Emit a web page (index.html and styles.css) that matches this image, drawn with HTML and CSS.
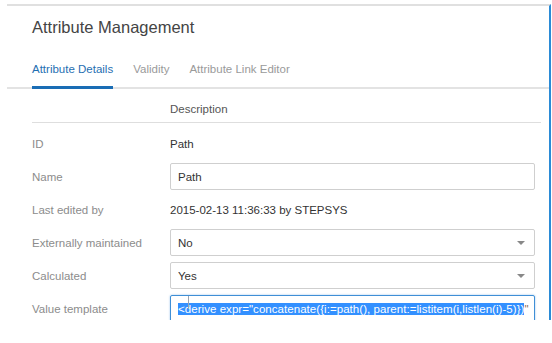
FILE: index.html
```html
<!DOCTYPE html>
<html>
<head>
<meta charset="utf-8">
<link rel="stylesheet" href="styles.css">
</head>
<body>
<div class="panel">
  <h1 class="title">Attribute Management</h1>
  <div class="tabs">
    <div class="tab active">Attribute Details</div>
    <div class="tab">Validity</div>
    <div class="tab">Attribute Link Editor</div>
  </div>
  <div class="content">
    <div class="head"><span>Description</span></div>
    <div class="form">
      <div class="label">ID</div>
      <div class="value">Path</div>

      <div class="label">Name</div>
      <div class="field"><div class="box"><span class="clip">Path</span></div></div>

      <div class="label">Last edited by</div>
      <div class="value">2015-02-13 11:36:33 by STEPSYS</div>

      <div class="label">Externally maintained</div>
      <div class="field"><div class="box select"><span class="clip">No</span><span class="caret"></span></div></div>

      <div class="label">Calculated</div>
      <div class="field"><div class="box select"><span class="clip">Yes</span><span class="caret"></span></div></div>

      <div class="label">Value template</div>
      <div class="field"><div class="box focus"><span class="clip"><span class="sel">&lt;derive expr="concatenate({i:=path(), parent:=listitem(i,listlen(i)-5)})</span><span class="rest">"</span></span><span class="ibeam"></span></div></div>
    </div>
  </div>
</div>
</body>
</html>
```

FILE: styles.css
```css
html, body {
  margin: 0;
  padding: 0;
  background: #ffffff;
}
body {
  font-family: "Liberation Sans", Arial, sans-serif;
  font-size: 11.5px;
  color: #333;
}
.panel {
  margin: 4px 0 0 7px;
  width: 542px;
  height: 314px;
  border-top: 2px solid #e0e0e0;
  border-right: 2px solid #2b8bd6;
}
.title {
  margin: 0;
  padding: 11px 0 0 25px;
  font-size: 16.5px;
  line-height: 20px;
  font-weight: normal;
  color: #444;
}
.tabs {
  display: flex;
  gap: 20px;
  margin-top: 25px;
  padding-left: 25px;
  border-bottom: 2px solid #e3e3e3;
}
.tab {
  line-height: 14px;
  padding-bottom: 11px;
  color: #9a9a9a;
}
.tab.active {
  color: #1f6fb2;
  border-bottom: 3px solid #1a6db5;
  padding-bottom: 8px;
  margin-bottom: -2px;
}
.content {
  margin-left: 25px;
  width: 509px;
}
.head {
  padding: 13px 0 6px 138px;
  line-height: 14px;
  color: #555;
  border-bottom: 1px solid #dedede;
}
.form {
  display: grid;
  grid-template-columns: 138px 365px;
  grid-auto-rows: 33px;
  padding-top: 4px;
}
.label, .value, .field {
  display: flex;
  align-items: center;
}
.label {
  color: #8c8c8c;
}
.value {
  color: #333;
}
.box {
  position: relative;
  box-sizing: border-box;
  width: 365px;
  height: 27px;
  border: 1px solid #cfcfcf;
  border-radius: 2px;
  padding: 0 7px;
  display: flex;
  align-items: center;
  color: #333;
}
.clip {
  flex: 1;
  overflow: hidden;
  white-space: nowrap;
  line-height: 16px;
}
.caret {
  width: 0;
  height: 0;
  border-left: 4px solid transparent;
  border-right: 4px solid transparent;
  border-top: 4px solid #888;
  margin-right: 2px;
}
.box.focus {
  border-color: #3f8fd6;
  box-shadow: 0 0 2px rgba(63, 143, 214, 0.6);
  padding-right: 4px;
}
.sel {
  background: #3390ff;
  color: #ffffff;
  letter-spacing: 0.05px;
}
.rest {
  color: #8a6a5a;
}
.ibeam {
  position: absolute;
  left: 17px;
  top: 0;
  width: 1px;
  height: 13px;
  background: #9aa4b0;
}
```
